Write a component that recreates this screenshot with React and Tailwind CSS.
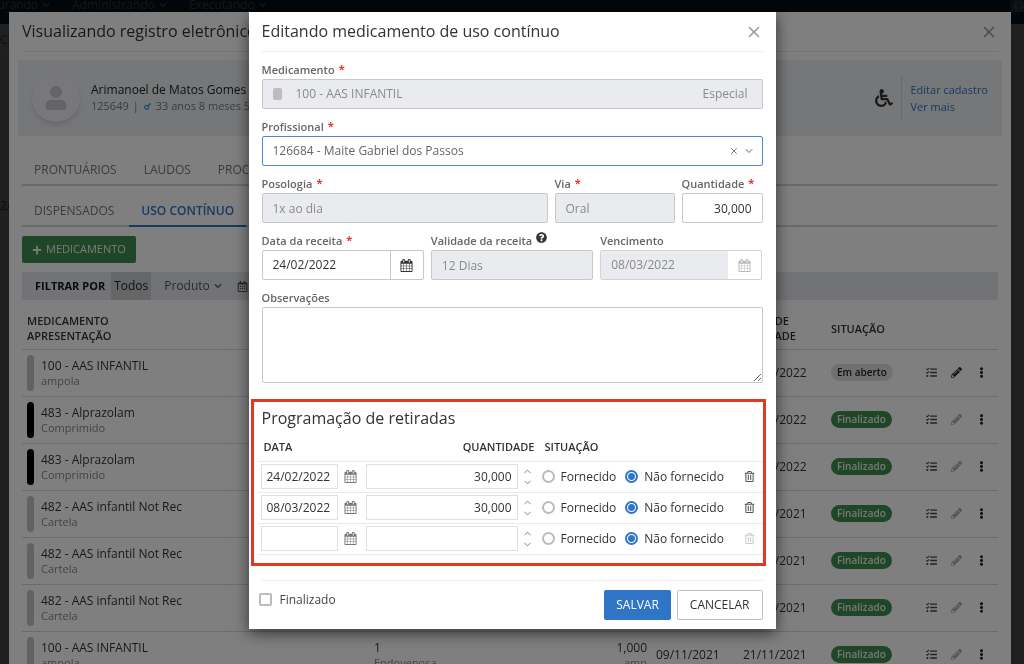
import React, { useState } from 'react';
import {
  FaChevronDown,
  FaEllipsisV,
  FaMars,
  FaPencilAlt,
  FaPlus,
  FaQuestionCircle,
  FaRegCalendarAlt,
  FaRegTrashAlt,
  FaTasks,
  FaUser,
  FaWheelchair,
} from 'react-icons/fa';
import { ChevronDown, ChevronUp, X } from 'lucide-react';

const medications = [
  { id: 1, name: '100 - AAS INFANTIL', form: 'ampola', color: 'bg-[#c4c4c4]', dose: '1', route: 'Oral', qty: '30,000', unit: 'amp', date: '24/02/2022', due: '08/03/2022', open: true },
  { id: 2, name: '483 - Alprazolam', form: 'Comprimido', color: 'bg-black', dose: '1', route: 'Oral', qty: '30,000', unit: 'comp', date: '10/01/2022', due: '09/02/2022', open: false },
  { id: 3, name: '483 - Alprazolam', form: 'Comprimido', color: 'bg-black', dose: '1', route: 'Oral', qty: '30,000', unit: 'comp', date: '10/01/2022', due: '09/02/2022', open: false },
  { id: 4, name: '482 - AAS infantil Not Rec', form: 'Cartela', color: 'bg-[#c4c4c4]', dose: '1', route: 'Oral', qty: '1,000', unit: 'cart', date: '09/11/2021', due: '21/11/2021', open: false },
  { id: 5, name: '482 - AAS infantil Not Rec', form: 'Cartela', color: 'bg-[#c4c4c4]', dose: '1', route: 'Oral', qty: '1,000', unit: 'cart', date: '09/11/2021', due: '21/11/2021', open: false },
  { id: 6, name: '482 - AAS infantil Not Rec', form: 'Cartela', color: 'bg-[#c4c4c4]', dose: '1', route: 'Oral', qty: '1,000', unit: 'cart', date: '09/11/2021', due: '21/11/2021', open: false },
  { id: 7, name: '100 - AAS INFANTIL', form: 'ampola', color: 'bg-[#c4c4c4]', dose: '1', route: 'Endovenosa', qty: '1,000', unit: 'amp', date: '09/11/2021', due: '21/11/2021', open: false },
];

const initialWithdrawals = [
  { id: 1, date: '24/02/2022', qty: '30,000', status: 'nao' },
  { id: 2, date: '08/03/2022', qty: '30,000', status: 'nao' },
  { id: 3, date: '', qty: '', status: 'nao' },
];

const CalendarIcon = ({ className }) => (
  <svg viewBox="0 0 1792 1792" fill="currentColor" className={className} aria-hidden="true">
    <path d="M192 1664h288v-288h-288v288zm352 0h320v-288h-320v288zm-352-352h288v-320h-288v320zm352 0h320v-320h-320v320zm-352-384h288v-288h-288v288zm736 736h320v-288h-320v288zm-384-736h320v-288h-320v288zm768 736h288v-288h-288v288zm-384-352h320v-320h-320v320zm-352-864v-288q0-13-9.5-22.5t-22.5-9.5h-64q-13 0-22.5 9.5t-9.5 22.5v288q0 13 9.5 22.5t22.5 9.5h64q13 0 22.5-9.5t9.5-22.5zm736 864h288v-320h-288v320zm-384-384h320v-288h-320v288zm384 0h288v-288h-288v288zm32-480v-288q0-13-9.5-22.5t-22.5-9.5h-64q-13 0-22.5 9.5t-9.5 22.5v288q0 13 9.5 22.5t22.5 9.5h64q13 0 22.5-9.5t9.5-22.5zm384-64v1280q0 52-38 90t-90 38h-1408q-52 0-90-38t-38-90v-1280q0-52 38-90t90-38h128v-96q0-66 47-113t113-47h64q66 0 113 47t47 113v96h384v-96q0-66 47-113t113-47h64q66 0 113 47t47 113v96h128q52 0 90 38t38 90z" />
  </svg>
);

const Field = ({ id, label, required, help, children }) => (
  <div className="min-w-0">
    <div className="flex h-[27px] items-end pb-px leading-4">
      <label htmlFor={id} className="text-[11px] font-semibold whitespace-nowrap text-[#666]">{label}</label>
      {required && <span className="ml-1 pb-px text-[11px] leading-4 font-bold text-[#e5382b]">*</span>}
      {help && (
        <button type="button" aria-label="Ajuda" className="ml-1 pb-[6px] text-[#333]">
          <FaQuestionCircle size={11} />
        </button>
      )}
    </div>
    {children}
  </div>
);

const PageBackground = () => (
  <div className="h-screen overflow-hidden bg-white">
    <nav className="flex h-6 items-start justify-between bg-[#0e2f52] text-xs leading-[10px] text-[#aab]">
      <div className="-ml-5 flex gap-[22px]">
        <a href="#" className="flex items-center gap-1">Faturando <FaChevronDown size={8} /></a>
        <a href="#" className="flex items-center gap-1">Administrando <FaChevronDown size={8} /></a>
        <a href="#" className="flex items-center gap-1">Executando <FaChevronDown size={8} /></a>
      </div>
      <a href="#" aria-label="Ajuda" className="flex h-3 w-[14px] items-center justify-end bg-[#2a6fb5]">
        <FaQuestionCircle size={11} />
      </a>
    </nav>
    <div className="text-xs text-[#666]">
      <p className="pt-2">CE</p>
      <p className="pt-[150px]">2/</p>
    </div>
  </div>
);

const PatientCard = () => (
  <div className="-mx-1 mt-2 flex h-[76px] items-center bg-[#eceef2] px-[14px]">
    <div className="flex h-12 w-12 items-center justify-center rounded-full bg-[#f0f1f4] shadow-md">
      <FaUser size={24} className="text-[#c6c8cc]" />
    </div>
    <div className="ml-[11px] flex-1">
      <p className="text-xs leading-4 text-[#222]">Arimanoel de Matos Gomes</p>
      <p className="flex items-center gap-1 text-[11px] leading-4 text-[#777]">
        125649 <span>|</span> <FaMars size={9} className="text-[#2196d3]" /> 33 anos 8 meses 5 dias
      </p>
    </div>
    <FaWheelchair size={18} className="mr-2 text-[#333]" />
    <div className="flex h-11 flex-col justify-center border-l border-[#cfd2d6] pl-2 text-[11px] leading-[17px]">
      <a href="#" className="text-[#2f74c5]">Editar cadastro</a>
      <a href="#" className="text-[#2f74c5]">Ver mais</a>
    </div>
  </div>
);

const MedicationTable = () => (
  <table className="w-full table-fixed text-left text-xs text-[#333]">
    <colgroup>
      <col />
      <col className="w-[182px]" />
      <col className="w-[96px]" />
      <col className="w-[87px]" />
      <col className="w-[88px]" />
      <col className="w-[96px]" />
      <col className="w-[79px]" />
    </colgroup>
    <thead>
      <tr className="h-[49px] border-b border-[#d8d8d8] text-[11px] leading-[15px]">
        <th className="pt-2 pl-[5px] font-semibold">MEDICAMENTO<br />APRESENTAÇÃO</th>
        <th className="pt-2 pl-1 font-semibold">DOSE<br />VIA</th>
        <th className="pt-2 pr-px text-right font-semibold">QTDE.</th>
        <th className="pt-2 pl-2 font-semibold">DATA</th>
        <th className="pt-2 pl-2 font-semibold">DATA DE<br />VALIDADE</th>
        <th className="pt-2 pl-2 font-semibold">SITUAÇÃO</th>
        <th><span className="sr-only">Ações</span></th>
      </tr>
    </thead>
    <tbody>
      {medications.map(item => (
        <tr key={item.id} className="h-[47px] border-b border-[#d8d8d8] leading-[15px]">
          <td className="pl-[5px]">
            <div className="flex items-center gap-[7px]">
              <span className={`h-9 w-[7px] rounded ${item.color}`}></span>
              <div>
                <p>{item.name}</p>
                <p className="text-[11px] text-[#888]">{item.form}</p>
              </div>
            </div>
          </td>
          <td className="pl-1">
            <p>{item.dose}</p>
            <p className="text-[11px] text-[#888]">{item.route}</p>
          </td>
          <td className="pr-px text-right">
            <p>{item.qty}</p>
            <p className="text-[11px] text-[#888]">{item.unit}</p>
          </td>
          <td className="pl-2">{item.date}</td>
          <td className="pl-2">{item.due}</td>
          <td className="pl-2">
            <span
              className={`inline-block rounded-full px-[6px] text-[10px] leading-[17px] font-semibold ${
                item.open ? 'bg-[#dde0e5] text-[#222]' : 'bg-[#3f8f4f] text-[#eee]'
              }`}
            >
              {item.open ? 'Em aberto' : 'Finalizado'}
            </span>
          </td>
          <td>
            <div className="flex">
              <button type="button" aria-label="Detalhes" className="flex w-[25px] justify-center text-[#444]"><FaTasks size={11} /></button>
              <button type="button" aria-label="Editar" disabled={!item.open} className="flex w-[25px] justify-center text-[#333] disabled:text-[#aaa]"><FaPencilAlt size={11} /></button>
              <button type="button" aria-label="Mais opções" className="flex w-[25px] justify-center text-[#222]"><FaEllipsisV size={11} /></button>
            </div>
          </td>
        </tr>
      ))}
    </tbody>
  </table>
);

const RecordModal = () => (
  <div className="fixed inset-0 overflow-hidden bg-black/75 pt-3 pr-[13px] pl-[9px]">
    <div className="min-h-full bg-white px-[13px] shadow-xl">
      <div className="flex h-10 items-center justify-between border-b border-[#e8e8e8]">
        <h2 className="pb-[2px] text-base text-[#333]">Visualizando registro eletrônico</h2>
        <button type="button" aria-label="Fechar" className="text-[#999]"><X size={18} /></button>
      </div>
      <PatientCard />
      <div className="mt-4 flex h-[34px] items-center gap-[27px] border-b-2 border-[#d4d4d4] px-3 pt-1 text-xs text-[#777]">
        <a href="#">PRONTUÁRIOS</a>
        <a href="#">LAUDOS</a>
        <a href="#">PROCEDIMENTOS</a>
      </div>
      <div className="mt-2 flex h-[33px] border-b-2 border-[#d4d4d4] text-xs leading-[33px] text-[#777]">
        <a href="#" className="pr-[15px] pl-3">DISPENSADOS</a>
        <a href="#" className="h-[33px] border-b-2 border-[#2f74c5] px-3 font-semibold text-[#2f74c5]">USO CONTÍNUO</a>
      </div>
      <button type="button" className="mt-[9px] flex h-[27px] items-center gap-1 rounded-xs bg-[#3f8f4f] px-[10px] text-[11px] text-[#f2f2f2]">
        <FaPlus size={10} /> MEDICAMENTO
      </button>
      <div className="mt-[9px] flex h-7 items-center bg-[#e4e7ec] text-xs text-[#555]">
        <span className="pr-[6px] pl-[13px] text-[11px] font-bold text-[#111]">FILTRAR POR</span>
        <button type="button" className="h-7 bg-[#c9ccd1] px-[3px] text-[#222]">Todos</button>
        <button type="button" className="ml-[10px] flex items-center gap-1 px-[3px]">Produto <FaChevronDown size={8} /></button>
        <button type="button" aria-label="Período" className="ml-3"><FaRegCalendarAlt size={11} /></button>
      </div>
      <MedicationTable />
    </div>
  </div>
);

const WithdrawalRow = ({ item, onChange, onRemove }) => (
  <tr className="h-[31px] border-b border-[#ebebeb] text-[#333]">
    <td className="pl-[3px]">
      <div className="flex items-center gap-[6px]">
        <input
          type="text"
          aria-label="Data"
          value={item.date}
          onChange={(e) => onChange({ ...item, date: e.target.value })}
          className="h-[25px] w-[77px] border border-[#e0e0e0] px-[5px] text-xs"
        />
        <button type="button" aria-label="Abrir calendário" className="text-[#777]"><CalendarIcon className="h-[13px] w-[13px]" /></button>
      </div>
    </td>
    <td>
      <div className="flex items-center gap-1 pr-[2px]">
        <input
          type="text"
          aria-label="Quantidade"
          value={item.qty}
          onChange={(e) => onChange({ ...item, qty: e.target.value })}
          className="h-[25px] w-full min-w-0 border border-[#e0e0e0] px-[5px] text-right text-xs"
        />
        <div className="flex flex-col text-[#777]">
          <button type="button" aria-label="Aumentar"><ChevronUp size={11} /></button>
          <button type="button" aria-label="Diminuir"><ChevronDown size={11} /></button>
        </div>
      </div>
    </td>
    <td className="pl-[7px]">
      <div className="flex items-center gap-[9px] text-xs whitespace-nowrap">
        {[['fornecido', 'Fornecido'], ['nao', 'Não fornecido']].map(([value, label]) => (
          <label key={value} className="flex items-center gap-[6px]">
            <input
              type="radio"
              name={`situacao-${item.id}`}
              checked={item.status === value}
              onChange={() => onChange({ ...item, status: value })}
              className="h-[13px] w-[13px] appearance-none rounded-full border-2 border-[#bbb] checked:border-[#2f74c5] checked:bg-[radial-gradient(circle,#2f74c5_3px,#fff_4px)]"
            />
            {label}
          </label>
        ))}
      </div>
    </td>
    <td>
      <button type="button" aria-label="Remover" disabled={!item.date} onClick={onRemove} className="flex w-full justify-center text-[#555] disabled:text-[#ccc]">
        <FaRegTrashAlt size={11} />
      </button>
    </td>
  </tr>
);

const EditModal = () => {
  const [withdrawals, setWithdrawals] = useState(initialWithdrawals);
  const [receiptDate, setReceiptDate] = useState('24/02/2022');
  const [quantity, setQuantity] = useState('30,000');
  const [doctor, setDoctor] = useState('126684');
  const [notes, setNotes] = useState('');
  const [finished, setFinished] = useState(false);

  const updateRow = (row) => setWithdrawals(withdrawals.map(w => (w.id === row.id ? row : w)));
  const removeRow = (id) => setWithdrawals(withdrawals.filter(w => w.id !== id));

  const disabledInput = 'block h-[30px] w-full rounded-xs border border-[#c8c8c8] bg-[#eaebef] px-[10px] text-xs text-[#8a8a8a]';

  return (
    <div className="fixed inset-0 flex items-start justify-center overflow-hidden bg-black/50 pt-3">
      <form className="w-full max-w-[527px] bg-white shadow-[0_4px_14px_rgba(0,0,0,0.6)]" onSubmit={(e) => e.preventDefault()}>
        <div className="px-[13px]">
          <div className="flex h-10 items-center justify-between border-b border-[#ececec]">
            <h2 className="pb-[2px] text-base text-[#333]">Editando medicamento de uso contínuo</h2>
            <button type="button" aria-label="Fechar" className="text-[#999]"><X size={18} /></button>
          </div>

          <Field id="medicamento" label="Medicamento" required>
            <div className="flex h-[30px] items-center rounded-xs border border-[#c8c8c8] bg-[#eaebef] px-[10px] text-xs text-[#8a8a8a]">
              <span className="h-3 w-[9px] rounded-xs bg-[#bdbdbd]"></span>
              <input id="medicamento" type="text" disabled value="100 - AAS INFANTIL" className="ml-[14px] min-w-0 flex-1" />
              <span className="pr-1">Especial</span>
            </div>
          </Field>

          <Field id="profissional" label="Profissional" required>
            <div className="relative">
              <select
                id="profissional"
                value={doctor}
                onChange={(e) => setDoctor(e.target.value)}
                className="block h-[30px] w-full appearance-none rounded-xs border border-[#4a8ad8] bg-white px-[10px] text-xs text-[#666]"
              >
                <option value=""></option>
                <option value="126684">126684 - Maite Gabriel dos Passos</option>
              </select>
              <div className="pointer-events-none absolute inset-y-0 right-2 flex items-center gap-1 text-[#666]">
                <button type="button" aria-label="Limpar" onClick={() => setDoctor('')} className="pointer-events-auto"><X size={10} /></button>
                <ChevronDown size={12} />
              </div>
            </div>
          </Field>

          <div className="grid grid-cols-[286fr_120fr_81fr] gap-[7px]">
            <Field id="posologia" label="Posologia" required>
              <input id="posologia" type="text" disabled value="1x ao dia" className={disabledInput} />
            </Field>
            <Field id="via" label="Via" required>
              <input id="via" type="text" disabled value="Oral" className={disabledInput} />
            </Field>
            <Field id="quantidade" label="Quantidade" required>
              <input
                id="quantidade"
                type="text"
                value={quantity}
                onChange={(e) => setQuantity(e.target.value)}
                className="block h-[30px] w-full rounded-xs border border-[#c8c8c8] px-[10px] text-right text-xs text-[#333]"
              />
            </Field>
          </div>

          <div className="grid grid-cols-3 gap-[7px]">
            <Field id="data-receita" label="Data da receita" required>
              <div className="flex h-[30px] rounded-xs border border-[#c8c8c8] text-[#333]">
                <input
                  id="data-receita"
                  type="text"
                  value={receiptDate}
                  onChange={(e) => setReceiptDate(e.target.value)}
                  className="min-w-0 flex-1 px-[10px] text-xs"
                />
                <button type="button" aria-label="Abrir calendário" className="flex w-[33px] items-center justify-center border-l border-[#c8c8c8]">
                  <CalendarIcon className="h-[13px] w-[13px]" />
                </button>
              </div>
            </Field>
            <Field id="validade" label="Validade da receita" help>
              <input id="validade" type="text" disabled value="12 Dias" className={disabledInput} />
            </Field>
            <Field id="vencimento" label="Vencimento">
              <div className="flex h-[30px] rounded-xs border border-[#d4d4d4] text-[#8a8a8a]">
                <input id="vencimento" type="text" disabled value="08/03/2022" className="min-w-0 flex-1 bg-[#eaebef] px-[10px] text-xs" />
                <button type="button" disabled aria-label="Abrir calendário" className="flex w-[33px] items-center justify-center text-[#bbb]">
                  <CalendarIcon className="h-[13px] w-[13px]" />
                </button>
              </div>
            </Field>
          </div>

          <Field id="observacoes" label="Observações">
            <textarea
              id="observacoes"
              value={notes}
              onChange={(e) => setNotes(e.target.value)}
              className="block h-[76px] w-full rounded-xs border border-[#c8c8c8] px-[10px] text-xs"
            />
          </Field>
        </div>

        <section className="mt-4 mr-[10px] ml-[2px] border-3 border-[#e03a25] pb-2">
          <h3 className="px-2 text-base leading-8 text-[#333]">Programação de retiradas</h3>
          <table className="ml-1 w-[calc(100%-4px)] table-fixed text-left">
            <colgroup>
              <col className="w-[108px]" />
              <col />
              <col className="w-[202px]" />
              <col className="w-[26px]" />
            </colgroup>
            <thead>
              <tr className="h-[27px] border-b border-[#ebebeb] text-[11px] text-[#333]">
                <th className="pl-[6px] font-semibold">DATA</th>
                <th className="text-right font-semibold">QUANTIDADE</th>
                <th className="pl-[10px] font-semibold">SITUAÇÃO</th>
                <th></th>
              </tr>
            </thead>
            <tbody>
              {withdrawals.map(item => (
                <WithdrawalRow key={item.id} item={item} onChange={updateRow} onRemove={() => removeRow(item.id)} />
              ))}
            </tbody>
          </table>
        </section>

        <div className="mx-[13px] mt-[14px] flex items-center gap-[6px] border-t border-[#ececec] pt-[9px] pb-[9px]">
          <label className="-ml-[3px] flex flex-1 items-center gap-2 pb-[10px] text-xs text-[#444]">
            <input
              type="checkbox"
              checked={finished}
              onChange={(e) => setFinished(e.target.checked)}
              className="h-[13px] w-[13px] appearance-none rounded-xs border-2 border-[#bbb] checked:bg-[#2f74c5]"
            />
            Finalizado
          </label>
          <button type="submit" className="h-[30px] rounded-xs bg-[#2f74c5] px-3 text-xs text-white">SALVAR</button>
          <button type="button" className="h-[30px] rounded-xs border border-[#c0c0c0] bg-white px-3 text-xs text-[#333]">CANCELAR</button>
        </div>
      </form>
    </div>
  );
};

const App = () => {
  return (
    <div className="font-['Open_Sans',sans-serif]">
      <PageBackground />
      <RecordModal />
      <EditModal />
    </div>
  );
};

export default App;
